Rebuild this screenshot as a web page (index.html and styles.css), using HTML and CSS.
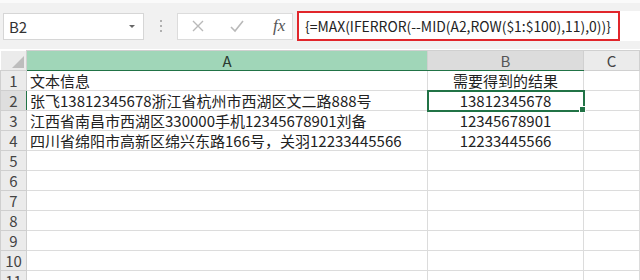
FILE: index.html
```html
<!DOCTYPE html>
<html lang="zh-CN">
<head>
  <meta charset="UTF-8">
  <title>Excel - 提取手机号</title>
  <link rel="stylesheet" href="styles.css">
</head>
<body>
  <div class="toolbar">
    <div class="namebox">
      <span>B2</span>
      <span class="caret"></span>
    </div>
    <div class="grip"><i></i><i></i><i></i></div>
    <div class="buttons">
      <svg class="btn" width="14" height="14" viewBox="0 0 14 14">
        <path d="M2 2 L12 12 M12 2 L2 12" stroke="#b9b9b9" stroke-width="1.4" fill="none"/>
      </svg>
      <svg class="btn" width="16" height="14" viewBox="0 0 16 14">
        <path d="M2 8 L6 12 L14 2" stroke="#b9b9b9" stroke-width="1.6" fill="none"/>
      </svg>
      <span class="fx">fx</span>
    </div>
    <div class="formula">
      <div class="formula-box">{=MAX(IFERROR(--MID(A2,ROW($1:$100),11),0))}</div>
    </div>
  </div>

  <table class="sheet">
    <colgroup>
      <col class="c-row">
      <col class="c-a">
      <col class="c-b">
      <col>
    </colgroup>
    <thead>
      <tr>
        <th class="corner"></th>
        <th class="col-sel">A</th>
        <th class="col-act">B</th>
        <th>C</th>
      </tr>
    </thead>
    <tbody>
      <tr><th>1</th><td>文本信息</td><td class="mid">需要得到的结果</td><td></td></tr>
      <tr><th class="row-act">2</th><td>张飞13812345678浙江省杭州市西湖区文二路888号</td><td class="mid active">13812345678</td><td></td></tr>
      <tr><th>3</th><td>江西省南昌市西湖区330000手机12345678901刘备</td><td class="mid">12345678901</td><td></td></tr>
      <tr><th>4</th><td>四川省绵阳市高新区绵兴东路166号，关羽12233445566</td><td class="mid">12233445566</td><td></td></tr>
      <tr><th>5</th><td></td><td></td><td></td></tr>
      <tr><th>6</th><td></td><td></td><td></td></tr>
      <tr><th>7</th><td></td><td></td><td></td></tr>
      <tr><th>8</th><td></td><td></td><td></td></tr>
      <tr><th>9</th><td></td><td></td><td></td></tr>
      <tr><th>10</th><td></td><td></td><td></td></tr>
      <tr><th>11</th><td></td><td></td><td></td></tr>
    </tbody>
  </table>
</body>
</html>
```

FILE: styles.css
```css
body {
  margin: 0;
  width: 640px;
  height: 280px;
  overflow: hidden;
  background: #fff;
  font-family: "Noto Sans CJK SC", "Noto Sans", sans-serif;
  color: #222;
}

.toolbar {
  height: 46px;
  background: #f1f1f1;
  border-top: 3px solid #fafafa;
  display: flex;
  align-items: center;
}

.namebox {
  margin-left: 3px;
  width: 141px;
  height: 27px;
  box-sizing: border-box;
  background: #fff;
  border: 1px solid #d6d6d6;
  display: flex;
  align-items: center;
  justify-content: space-between;
  padding: 0 8px 0 5px;
  font-size: 15px;
  color: #333;
}

.caret {
  width: 0;
  height: 0;
  border-left: 3px solid transparent;
  border-right: 3px solid transparent;
  border-top: 3px solid #666;
}

.grip {
  width: 33px;
  display: flex;
  flex-direction: column;
  align-items: center;
  gap: 3px;
}

.grip i {
  width: 2px;
  height: 2px;
  background: #b0b0b0;
}

.buttons {
  width: 116px;
  height: 27px;
  box-sizing: border-box;
  background: #fff;
  border: 1px solid #dcdcdc;
  display: flex;
  align-items: center;
  padding-left: 13px;
  gap: 24px;
}

.fx {
  font-family: "Liberation Serif", serif;
  font-style: italic;
  font-size: 17px;
  color: #555;
  margin-left: 4px;
}

.formula {
  flex: 1;
  margin-left: 4px;
  height: 30px;
  background: #fff;
  display: flex;
}

.formula-box {
  width: 323px;
  box-sizing: border-box;
  border: 2px solid #e1262b;
  font-size: 13.9px;
  line-height: 26px;
  padding-left: 6px;
  color: #222;
  white-space: nowrap;
  overflow: hidden;
}

.sheet {
  border-collapse: collapse;
  table-layout: fixed;
  width: 640px;
  margin-top: 1px;
  font-size: 15px;
}

.c-row { width: 26px; }
.c-a { width: 401px; }
.c-b { width: 156px; }

.sheet th,
.sheet td {
  height: 19px;
  padding: 0;
  border: 1px solid #dcdcdc;
  line-height: 18px;
  white-space: nowrap;
}

.sheet thead th {
  background: #ebebeb;
  border-color: #d0d0d0;
  font-weight: normal;
  color: #444;
}

.sheet thead th.corner {
  position: relative;
  border-top: none;
  border-left: none;
}

.corner::after {
  content: "";
  position: absolute;
  right: 2px;
  bottom: 2px;
  border-left: 12px solid transparent;
  border-bottom: 12px solid #bdbdbd;
}

.sheet thead th.col-sel {
  background: #a0d6b8;
  border-bottom: 1px solid #217346;
  color: #2a3a30;
}

.sheet thead th.col-act {
  background: #dcdcdc;
  border-bottom: 1px solid #217346;
  color: #555;
}

.sheet tbody th {
  background: #ebebeb;
  border-color: #cfcfcf;
  font-weight: normal;
  color: #444;
  text-align: center;
}

.sheet tbody th.row-act {
  background: #dedede;
  border-right: 1px solid #217346;
}

.sheet td {
  padding-left: 3px;
}

.sheet td.mid {
  text-align: center;
  padding-left: 0;
}

.sheet td.active {
  position: relative;
  outline: 2px solid #217346;
  outline-offset: -1px;
}

.active::after {
  content: "";
  position: absolute;
  right: -3px;
  bottom: -3px;
  width: 5px;
  height: 5px;
  background: #217346;
  border: 1px solid #fff;
}
```
